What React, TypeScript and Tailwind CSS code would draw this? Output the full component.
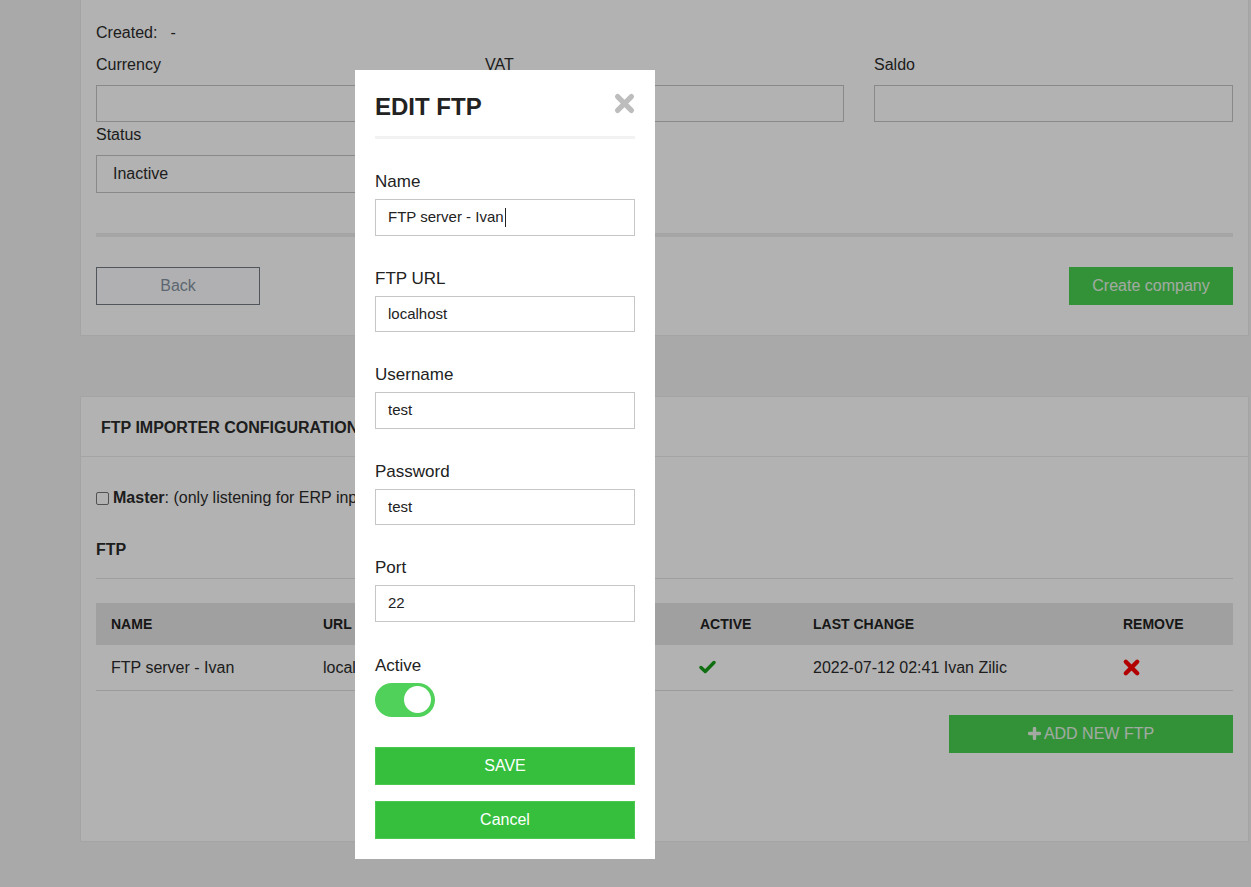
import React from 'react';

const font = { fontFamily: '"Liberation Sans", Arial, sans-serif' };

function TimesIcon({ className, size = 20 }: { className?: string; size?: number }) {
  return (
    <svg width={size} height={size} viewBox="0 0 20 20" className={className}>
      <path d="M4 4 L16 16 M16 4 L4 16" stroke="currentColor" strokeWidth="4.6" strokeLinecap="round" fill="none" />
    </svg>
  );
}

function CheckIcon({ className }: { className?: string }) {
  return (
    <svg width="17" height="14" viewBox="0 0 17 14" className={className}>
      <path d="M2 7.5 L6.2 11.5 L15 2.5" stroke="currentColor" strokeWidth="3.4" strokeLinecap="round" strokeLinejoin="round" fill="none" />
    </svg>
  );
}

function PlusIcon() {
  return (
    <svg width="13" height="13" viewBox="0 0 13 13" className="mr-[3px]">
      <path d="M6.5 1.5 V11.5 M1.5 6.5 H11.5" stroke="currentColor" strokeWidth="3.4" strokeLinecap="round" fill="none" />
    </svg>
  );
}

function Field({ label, value, last }: { label: string; value: string; last?: boolean }) {
  return (
    <div className={last ? '' : 'mb-[32px]'}>
      <div className="text-[17px] leading-[20px] text-[#222] pt-px mb-[7px]">{label}</div>
      <div className="h-[36.5px] border border-[#c6c6c6] flex items-center pl-[12px] text-[15px] text-[#222]">
        {value}
        {label === 'Name' && <span className="inline-block w-px h-[19px] bg-[#222] ml-px" />}
      </div>
    </div>
  );
}

export default function App() {
  const cols = [
    { name: 'NAME', w: 'w-[212px]' },
    { name: 'URL', w: 'w-[192px]' },
    { name: 'USERNAME', w: 'w-[185px]' },
    { name: 'ACTIVE', w: 'w-[113px]' },
    { name: 'LAST CHANGE', w: 'w-[310px]' },
    { name: 'REMOVE', w: 'w-[125px]' },
  ];

  return (
    <div style={font} className="min-h-[887px] bg-[#f3f3f3] pl-[80px] pr-[2px] text-[16px] text-[#2b2b2b]">
      {/* company card */}
      <div className="bg-white border border-t-0 border-[#ebebeb] px-[15px] pt-[23px] pb-[30px]">
        <div className="leading-[20px] flex gap-[13px]">
          <span>Created:</span>
          <span>-</span>
        </div>
        <div className="grid grid-cols-3 gap-x-[30px] mt-[12px]">
          {['Currency', 'VAT', 'Saldo'].map(l => (
            <div key={l}>
              <div className="leading-[20px] mb-[10px]">{l}</div>
              <div className="h-[37px] border border-[#c4c4c4]" />
            </div>
          ))}
        </div>
        <div className="grid grid-cols-3 gap-x-[30px] mt-[3px]">
          <div>
            <div className="leading-[20px] mb-[10px]">Status</div>
            <div className="h-[38px] border border-[#c4c4c4] flex items-center pl-[16px]">Inactive</div>
          </div>
        </div>
        <div className="h-[4px] bg-[#ededed] mt-[40px]" />
        <div className="flex justify-between mt-[30px]">
          <button className="w-[164px] h-[38px] border border-[#737b84] bg-[#fcfdff] text-[#8593a1]">Back</button>
          <button className="w-[164px] h-[38px] bg-[#49d251] text-[#e8f4e8]">Create company</button>
        </div>
      </div>

      {/* ftp card */}
      <div className="bg-white border border-[#ebebeb] mt-[60px]">
        <div className="h-[60px] border-b border-[#ebebeb] flex items-center pl-[20px] font-bold leading-[20px] pt-[3px]">
          FTP IMPORTER CONFIGURATION
        </div>
        <div className="px-[15px] pt-[31px] pb-[88px]">
          <div className="flex items-center leading-[20px]">
            <span className="w-[13px] h-[13px] border border-[#767676] rounded-[2px] bg-white mr-[4px]" />
            <b>Master</b>
            <span>: (only listening for ERP input)</span>
          </div>
          <div className="font-bold leading-[20px] mt-[32px]">FTP</div>
          <div className="h-px bg-[#e2e2e2] mt-[18px]" />
          <table className="w-full table-fixed mt-[24px] border-collapse">
            <thead>
              <tr className="bg-[#e6e6e6] h-[42px]">
                {cols.map(c => (
                  <th key={c.name} className={`${c.w} text-left pl-[15px] text-[14px] font-bold text-[#222]`}>{c.name}</th>
                ))}
              </tr>
            </thead>
            <tbody>
              <tr className="h-[45px] border-b border-[#dedede]">
                <td className="pl-[15px] pt-[2px]">FTP server - Ivan</td>
                <td className="pl-[15px] pt-[2px]">localhost</td>
                <td className="pl-[15px] pt-[2px]">test</td>
                <td className="pl-[15px]"><CheckIcon className="text-[#169e16] ml-[-1px]" /></td>
                <td className="pl-[15px] pt-[2px]">2022-07-12 02:41 Ivan Zilic</td>
                <td className="pl-[14px]"><TimesIcon size={19} className="text-[#ff0000]" /></td>
              </tr>
            </tbody>
          </table>
          <div className="flex justify-end mt-[24px]">
            <button className="w-[284px] h-[38px] bg-[#49d251] text-[#e8f4e8] flex items-center justify-center">
              <PlusIcon />
              ADD NEW FTP
            </button>
          </div>
        </div>
      </div>
      <div className="h-[45px]" />

      {/* overlay */}
      <div className="fixed inset-0 bg-black/30" />

      {/* modal */}
      <div className="fixed left-[355px] top-[70px] w-[300px] bg-white p-[20px]">
        <div className="flex justify-between items-start">
          <h2 className="text-[24px] leading-[34px] font-bold text-[#222]">EDIT FTP</h2>
          <TimesIcon size={23} className="text-[#bdbdbd] mt-[2px] mr-[-1px]" />
        </div>
        <div className="h-[3px] bg-[#f2f2f2] mt-[12px] mb-[32px]" />
        <Field label="Name" value="FTP server - Ivan" />
        <Field label="FTP URL" value="localhost" />
        <Field label="Username" value="test" />
        <Field label="Password" value="test" />
        <Field label="Port" value="22" last />
        <div className="mt-[34px] text-[17px] leading-[20px] text-[#222] mb-[7px]">Active</div>
        <div className="w-[60px] h-[34px] rounded-full bg-[#4fd15a] flex items-center justify-end pr-[4px]">
          <div className="w-[27px] h-[27px] rounded-full bg-white" />
        </div>
        <button className="mt-[30px] w-full h-[38px] bg-[#35bf3d] border border-[#4cc750] text-white text-[16px]">SAVE</button>
        <button className="mt-[16px] w-full h-[38px] bg-[#35bf3d] border border-[#4cc750] text-white text-[16px]">Cancel</button>
      </div>
    </div>
  );
}
